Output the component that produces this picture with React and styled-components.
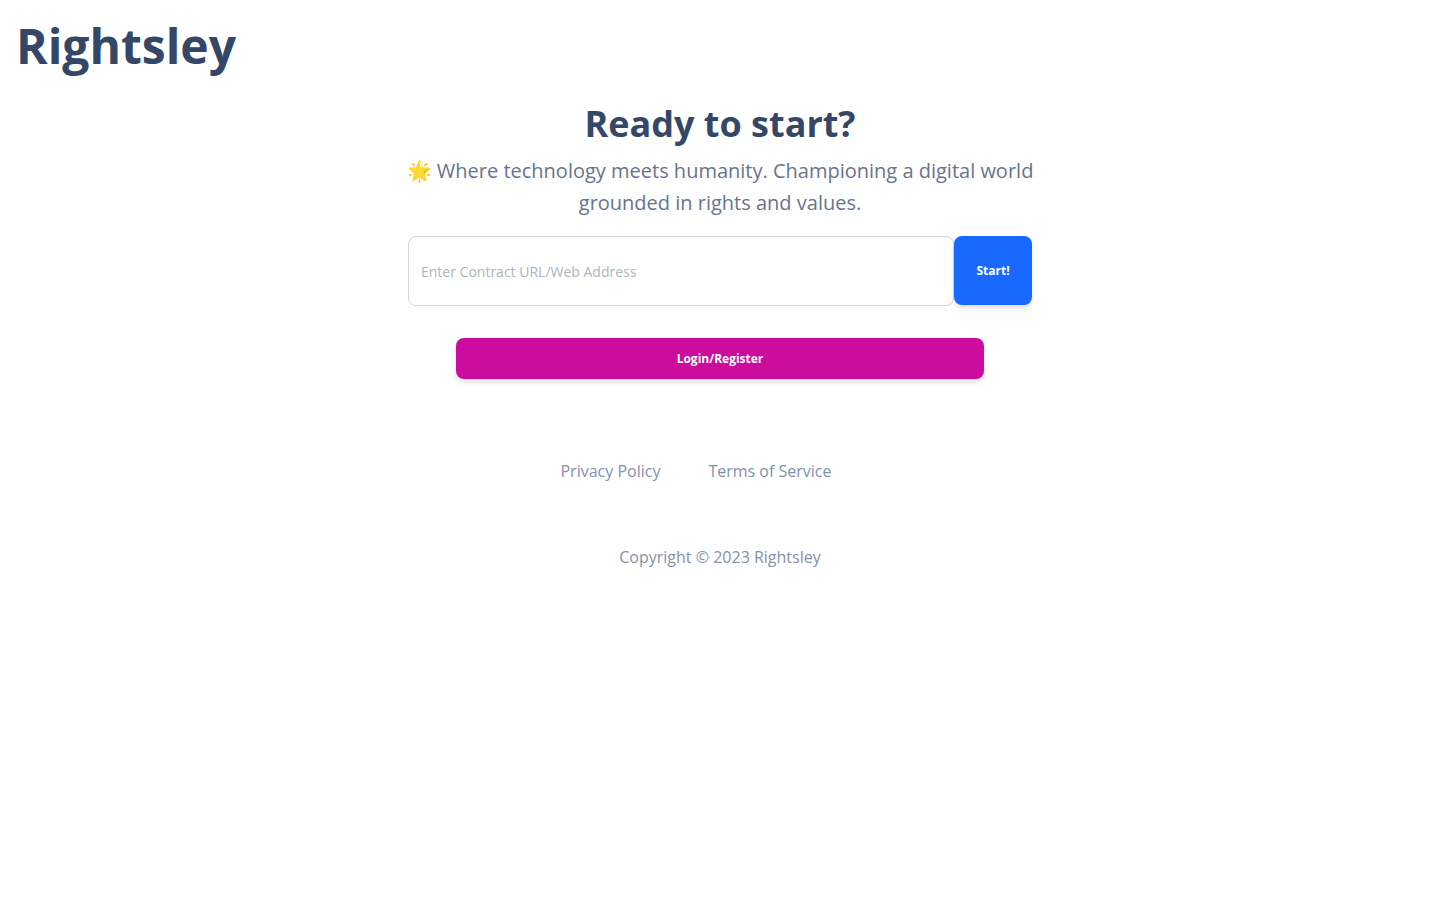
import React, { useState } from 'react';
import styled, { createGlobalStyle } from 'styled-components';

const App = () => {
    const [address, setAddress] = useState("");

    const handleSubmit = (e) => {
        e.preventDefault();
    };

    return (
        <>
            <GlobalStyle />
            <Header>
                <Brand>Rightsley</Brand>
            </Header>
            <Main>
                <Title>Ready to start?</Title>
                <Lead>🌟 Where technology meets humanity. Championing a digital world grounded in rights and values.</Lead>
                <AddressForm onSubmit={handleSubmit}>
                    <AddressInput
                        type="text"
                        aria-label="Enter Contract URL/Web Address"
                        placeholder="Enter Contract URL/Web Address"
                        value={address}
                        onChange={(e) => setAddress(e.target.value)}
                    />
                    <Button type="submit" $color="#1769ff">Start!</Button>
                </AddressForm>
                <LoginBox>
                    <Button type="button" $color="#cb0c9f" $full>Login/Register</Button>
                </LoginBox>
            </Main>
            <Footer>
                <FooterNav>
                    <FooterLink href="#privacy">Privacy Policy</FooterLink>
                    <FooterLink href="#terms">Terms of Service</FooterLink>
                </FooterNav>
                <Copyright>Copyright © 2023 Rightsley</Copyright>
            </Footer>
        </>
    );
};

export default App;

const GlobalStyle = createGlobalStyle`
    * {
        box-sizing: border-box;
    }

    body {
        margin: 0;
        background-color: #fff;
        color: #67748e;
        font-family: "Open Sans", "Noto Sans", sans-serif;
        font-size: 16px;
        line-height: 24px;
    }
`;

const Header = styled.header`
    padding: 16px;
`;

const Brand = styled.h1`
    margin: 0;
    color: #344767;
    font-size: 48px;
    font-weight: 700;
    line-height: 60px;
`;

const Main = styled.main`
    max-width: 672px;
    margin: 0 auto;
    padding: 8px 16px 0;
    text-align: center;
`;

const Title = styled.h2`
    margin: 0 0 8px;
    color: #344767;
    font-size: 36px;
    font-weight: 700;
    line-height: 47px;
`;

const Lead = styled.p`
    margin: 0 0 17px;
    font-size: 20px;
    line-height: 32px;
`;

const AddressForm = styled.form`
    display: flex;
    align-items: flex-start;
    padding: 0 8px;
`;

const AddressInput = styled.input`
    flex: 1;
    min-width: 0;
    height: 70px;
    padding: 8px 12px;
    border: 1px solid #d2d6da;
    border-radius: 8px;
    background-color: #fff;
    color: #495057;
    font-family: inherit;
    font-size: 14px;

    &::placeholder {
        color: #adb5bd;
    }
`;

const Button = styled.button`
    width: ${props => props.$full ? '100%' : '78px'};
    padding: ${props => props.$full ? '12px 16px' : '26px 16px'};
    border: 0;
    border-radius: 8px;
    background-color: ${props => props.$color};
    box-shadow: 0 4px 7px -1px rgba(0, 0, 0, 0.11), 0 2px 4px -1px rgba(0, 0, 0, 0.07);
    color: #fff;
    font-family: inherit;
    font-size: 12px;
    font-weight: 700;
    line-height: 17px;
    cursor: pointer;
`;

const LoginBox = styled.div`
    padding: 32px 56px 0;
`;

const Footer = styled.footer`
    max-width: 672px;
    margin: 0 auto;
    padding: 80px 24px 48px;
    color: #8392ab;
    text-align: center;
`;

const FooterNav = styled.nav`
    display: flex;
    justify-content: center;
    gap: 48px;
    padding-right: 48px;
`;

const FooterLink = styled.a`
    color: inherit;
    text-decoration: none;
`;

const Copyright = styled.p`
    margin: 62px 0 0;
`;
